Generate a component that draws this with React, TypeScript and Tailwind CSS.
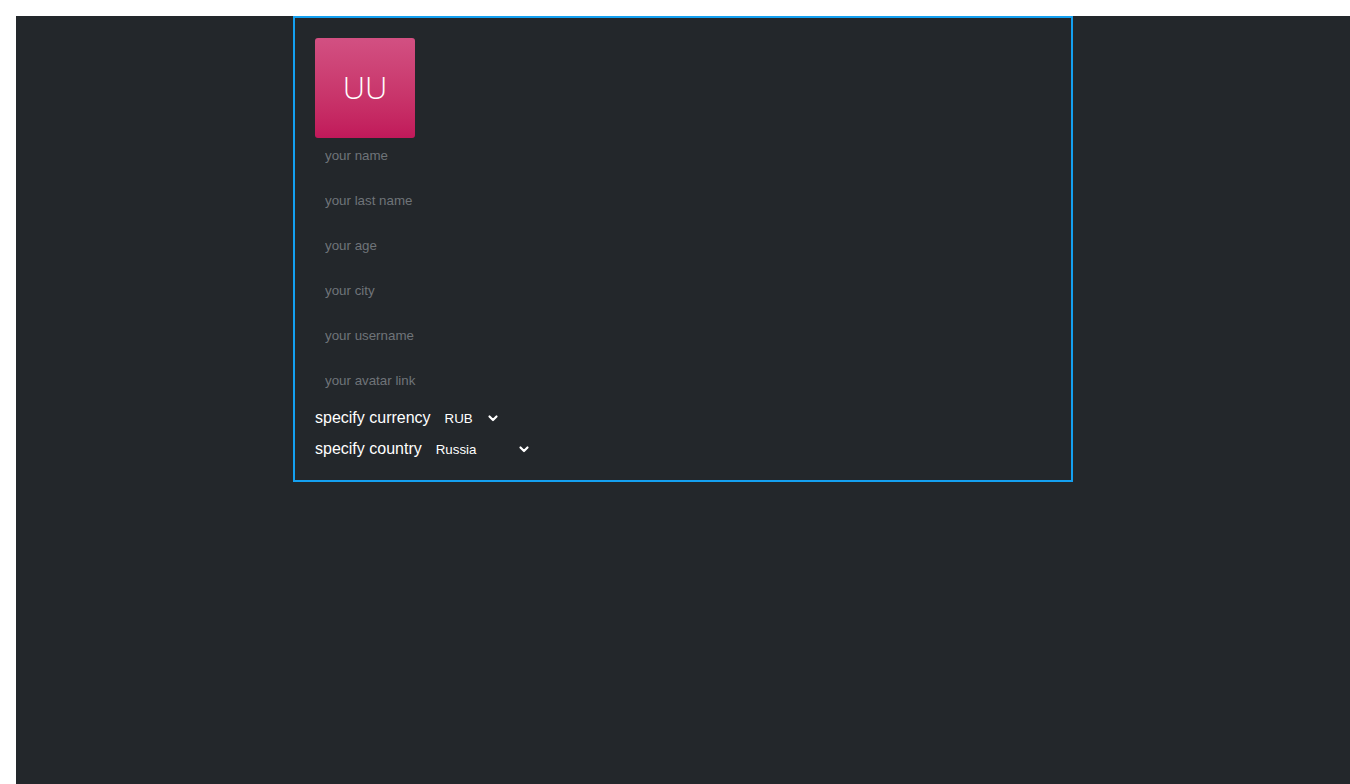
import React, { useState } from 'react';

const fields = [
  'your name',
  'your last name',
  'your age',
  'your city',
  'your username',
  'your avatar link',
];

function Chevron() {
  return (
    <svg
      viewBox="0 0 12 12"
      className="pointer-events-none absolute right-1 top-1/2 h-3 w-3 -translate-y-1/2"
      fill="none"
      stroke="white"
      strokeWidth="2.2"
      strokeLinecap="round"
      strokeLinejoin="round"
    >
      <path d="M2.5 4.5 6 8l3.5-3.5" />
    </svg>
  );
}

interface ISelectProps {
  label: string;
  value: string;
  options: string[];
  width: string;
  onChange: (v: string) => void;
}

function LabeledSelect({ label, value, options, width, onChange }: ISelectProps) {
  return (
    <div className="flex h-6 items-center">
      <span className="text-[16px] text-white">{label}</span>
      <div className={`relative ml-[9px] ${width}`}>
        <select
          value={value}
          onChange={(e) => onChange(e.target.value)}
          className="w-full appearance-none bg-transparent pl-[5px] pr-5 text-[13.33px] text-white outline-none"
        >
          {options.map((o) => (
            <option key={o} value={o} className="bg-[#23272b]">
              {o}
            </option>
          ))}
        </select>
        <Chevron />
      </div>
    </div>
  );
}

function App() {
  const [currency, setCurrency] = useState('RUB');
  const [country, setCountry] = useState('Russia');

  return (
    <div className="min-h-screen bg-white pl-4 pt-4 font-['Liberation_Sans',Arial,sans-serif]">
      <div className="min-h-[768px] bg-[#23272b]">
        <div className="mx-auto w-[780px] border-2 border-[#14a0f0] px-5 pb-[19px] pt-5">
          <div className="flex h-[100px] w-[100px] items-center justify-center rounded-[3px] bg-gradient-to-b from-[#d25082] to-[#c1185a]">
            <span className="-mt-[2px] font-['Open_Sans',sans-serif] text-[31px] font-[350] text-white">UU</span>
          </div>
          <div className="flex flex-col gap-[11px]">
            {fields.map((f) => (
              <input
                key={f}
                placeholder={f}
                className="h-[34px] w-full bg-transparent px-[10px] text-[13.33px] text-white outline-none placeholder:text-[#6f7479]"
              />
            ))}
          </div>
          <div className="mt-[9px] flex flex-col gap-[7px]">
            <LabeledSelect
              label="specify currency"
              value={currency}
              options={['RUB', 'USD', 'EUR']}
              width="w-[63px]"
              onChange={setCurrency}
            />
            <LabeledSelect
              label="specify country"
              value={country}
              options={['Russia', 'USA', 'Germany']}
              width="w-[103px]"
              onChange={setCountry}
            />
          </div>
        </div>
      </div>
    </div>
  );
}

export default App;
